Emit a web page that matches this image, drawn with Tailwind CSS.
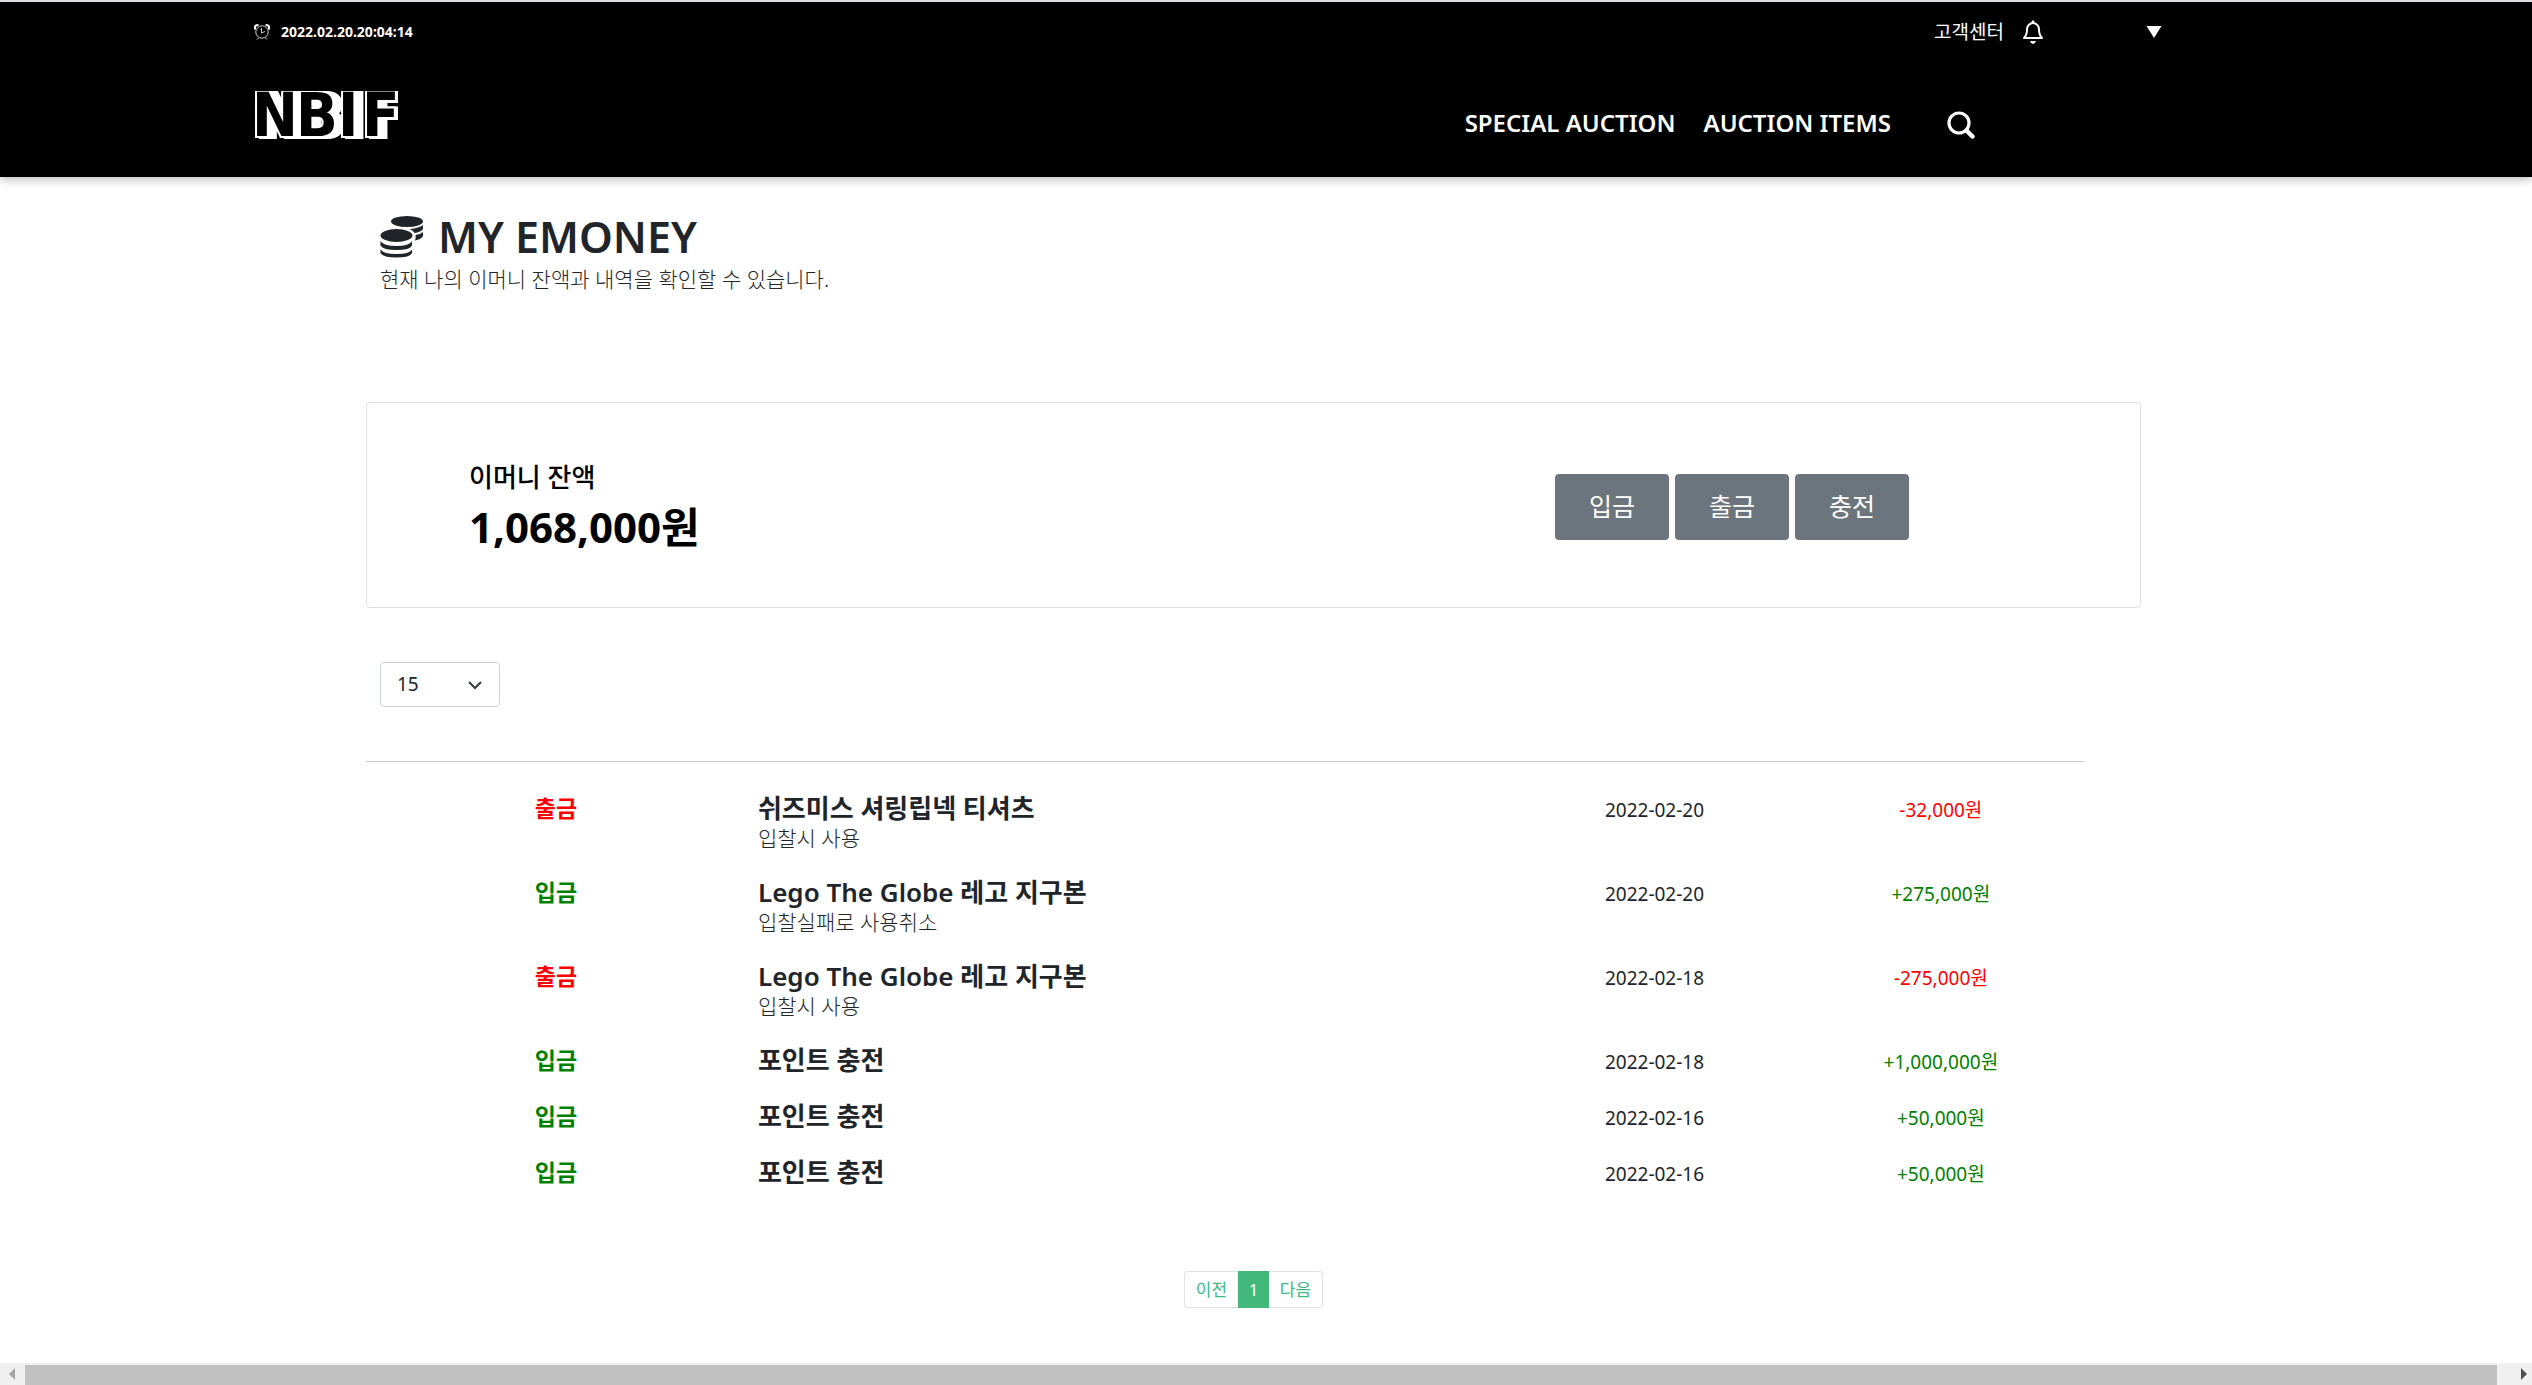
<!DOCTYPE html>
<html lang="ko">
<head>
<meta charset="utf-8">
<meta name="viewport" content="width=device-width, initial-scale=1">
<title>NBIF - MY EMONEY</title>
<script src="https://cdn.jsdelivr.net/npm/@tailwindcss/browser@4"></script>
</head>
<body class="min-h-screen flex flex-col bg-white text-[#212529] font-['Noto_Sans','Noto_Sans_CJK_KR',sans-serif]">
<header class="bg-black text-white border-t-2 border-[#dee1e3] shadow-[0_2px_10px_rgba(0,0,0,0.3)] h-[177px] pl-[254px]">
  <div class="flex items-center h-[60px] pr-[370px]">
    <svg class="w-4 h-4" viewBox="0 0 16 16" fill="none" stroke="#fff"><circle cx="8" cy="8" r="6.200" stroke="#ccc"/><path d="M1 5.500V3Q1 1 4.500 1M15 5.500V3Q15 1 11.500 1" stroke-width="2"/><path d="M7.500 4V9L11 7.500M3 15.500l2-2M13 15.500l-2-2" stroke="#ccc"/></svg>
    <time class="ml-[11px] text-sm font-bold">2022.02.20.20:04:14</time>
    <a href="#" class="ml-auto text-[19px]">고객센터</a>
    <button type="button" aria-label="알림" class="ml-[18px]"><svg class="w-[22px] h-6" viewBox="0 0 22 24" fill="none" stroke="#fff" stroke-width="2" stroke-linejoin="round"><path d="M2 18Q5 15 5 9.500a6 6.500 0 0 1 12 0Q17 15 20 18Z"/><path d="M11 .5v2.500" stroke-width="2.500"/><path d="M8 21h6q-1 3-3 3t-3-3z" fill="#fff" stroke="none"/></svg></button>
    <button type="button" class="ml-[102px]" aria-label="메뉴"><svg class="w-4 h-3" viewBox="0 0 16 12"><path d="M.5 0h15L8 12z" fill="#fff"/></svg></button>
  </div>
  <div class="flex items-center h-[106px] pr-[557px]">
    <a href="#" aria-label="NBIF">
      <svg class="w-36 h-12" viewBox="0 0 144 48" font-family="'Liberation Sans Narrow','DejaVu Sans Condensed',sans-serif" font-weight="bold" font-size="61">
        <defs><text id="logo" x="-2 42 84 108" y="45">NBIF</text></defs>
        <g fill="#fff" stroke="#fff" stroke-width="4"><use href="#logo"/><use href="#logo" x="2"/><use href="#logo" x="4" y="1"/><use href="#logo" x="6" y="1"/><use href="#logo" x="8" y="1"/></g>
        <use href="#logo" fill="#000"/>
      </svg>
    </a>
    <nav class="ml-auto mt-4 flex items-center text-2xl font-semibold">
      <a href="#">SPECIAL AUCTION</a>
      <a href="#" class="ml-7">AUCTION ITEMS</a>
      <button type="button" class="ml-14 mt-1" aria-label="검색"><svg class="w-7 h-7" viewBox="0 0 28 28" fill="none" stroke="#fff" stroke-width="3.200" stroke-linecap="round"><circle cx="12" cy="12" r="10"/><path d="M19.500 19.500l6 6" stroke-width="4.500"/></svg></button>
    </nav>
  </div>
</header>

<main class="pl-[366px] pr-[391px] pt-9">
  <div class="pl-[14px]">
    <h1 class="flex items-center text-[43px] leading-12 font-semibold">
      <svg class="w-11 h-11 mr-3.5" viewBox="0 0 44 44" fill="currentColor"><ellipse cx="27" cy="6.500" rx="16" ry="5.500"/><ellipse cx="16.500" cy="20.500" rx="16" ry="6.500"/><path d="M.5 26q3 5 16 5t15.500-5v4.500q-2 4.500-15.500 4.500T.5 30.500zM.5 34.500q3 4.500 16 4.500t15.500-4.500V38q-2 4.500-15.500 4.500T.5 38zM30 14q9-1 13-4v4q-2 3-8.500 4-1.500-2.500-4.500-4zM35.500 20q5-.5 7.500-3v4q-1.500 3-8 4.500 1-3 .5-5.500z"/></svg>
      MY EMONEY
    </h1>
    <p class="mt-1 text-[21px] leading-7 font-light">현재 나의 이머니 잔액과 내역을 확인할 수 있습니다.</p>
  </div>

  <section class="mt-[109px] h-[206px] flex items-center justify-between border border-[#dfdfdf] rounded pl-[102px] pr-[231px] text-black">
    <div>
      <h2 class="mt-1 text-[26px] leading-9 font-medium">이머니 잔액</h2>
      <p class="mt-1 text-[42px] leading-14 font-bold">1,068,000원</p>
    </div>
    <div class="mt-1 flex gap-1.5 text-[25px] text-white">
      <button type="button" class="w-[114px] h-[66px] rounded bg-[#6c757d]">입금</button>
      <button type="button" class="w-[114px] h-[66px] rounded bg-[#6c757d]">출금</button>
      <button type="button" class="w-[114px] h-[66px] rounded bg-[#6c757d]">충전</button>
    </div>
  </section>

  <div class="mt-[54px] ml-[14px] grid w-[120px] h-[45px]">
    <select aria-label="표시 개수" class="col-start-1 row-start-1 appearance-none border border-[#ced4da] rounded pl-4 text-[19px] bg-white"><option>15</option><option>30</option><option>50</option></select>
    <svg class="col-start-1 row-start-1 justify-self-end self-center mr-[18px] w-3.5 h-3.5 pointer-events-none" viewBox="0 0 14 14" fill="none" stroke="#343a40" stroke-width="2"><path d="M1 4l6 6 6-6"/></svg>
  </div>

  <div class="mt-[54px] mr-[57px] border-t border-[#c8c9ca] pt-[18px]">
    <table class="w-full table-fixed text-[19px]">
      <colgroup><col class="w-[22%]"><col><col class="w-1/6"><col class="w-1/6"></colgroup>
      <tbody class="align-top">
        <tr>
          <td class="py-3 pl-0.5 text-center text-[23px] leading-8 font-bold text-[#ff0000]">출금</td>
          <td class="py-3 pl-3.5"><p class="text-[26px] leading-8 font-semibold">쉬즈미스 셔링립넥 티셔츠</p><p class="text-[21px] leading-7 font-light">입찰시 사용</p></td>
          <td class="py-3 text-center leading-9">2022-02-20</td>
          <td class="py-3 text-center leading-9 text-[#ff0000]">-32,000원</td>
        </tr>
        <tr>
          <td class="py-3 pl-0.5 text-center text-[23px] leading-8 font-bold text-[#008000]">입금</td>
          <td class="py-3 pl-3.5"><p class="text-[26px] leading-8 font-semibold">Lego The Globe 레고 지구본</p><p class="text-[21px] leading-7 font-light">입찰실패로 사용취소</p></td>
          <td class="py-3 text-center leading-9">2022-02-20</td>
          <td class="py-3 text-center leading-9 text-[#008000]">+275,000원</td>
        </tr>
        <tr>
          <td class="py-3 pl-0.5 text-center text-[23px] leading-8 font-bold text-[#ff0000]">출금</td>
          <td class="py-3 pl-3.5"><p class="text-[26px] leading-8 font-semibold">Lego The Globe 레고 지구본</p><p class="text-[21px] leading-7 font-light">입찰시 사용</p></td>
          <td class="py-3 text-center leading-9">2022-02-18</td>
          <td class="py-3 text-center leading-9 text-[#ff0000]">-275,000원</td>
        </tr>
        <tr class="h-14">
          <td class="pt-3 pl-0.5 text-center text-[23px] leading-8 font-bold text-[#008000]">입금</td>
          <td class="pt-3 pl-3.5 text-[26px] leading-8 font-semibold">포인트 충전</td>
          <td class="pt-3 text-center leading-9">2022-02-18</td>
          <td class="pt-3 text-center leading-9 text-[#008000]">+1,000,000원</td>
        </tr>
        <tr class="h-14">
          <td class="pt-3 pl-0.5 text-center text-[23px] leading-8 font-bold text-[#008000]">입금</td>
          <td class="pt-3 pl-3.5 text-[26px] leading-8 font-semibold">포인트 충전</td>
          <td class="pt-3 text-center leading-9">2022-02-16</td>
          <td class="pt-3 text-center leading-9 text-[#008000]">+50,000원</td>
        </tr>
        <tr class="h-14">
          <td class="pt-3 pl-0.5 text-center text-[23px] leading-8 font-bold text-[#008000]">입금</td>
          <td class="pt-3 pl-3.5 text-[26px] leading-8 font-semibold">포인트 충전</td>
          <td class="pt-3 text-center leading-9">2022-02-16</td>
          <td class="pt-3 text-center leading-9 text-[#008000]">+50,000원</td>
        </tr>
      </tbody>
    </table>
  </div>

  <nav aria-label="페이지" class="mt-[71px] flex justify-center text-[17px] leading-[35px] text-center text-[#41b883]">
    <a href="#" class="w-[54px] border border-r-0 border-[#dee2e6] rounded-l">이전</a>
    <a href="#" aria-current="page" class="w-[31px] border border-[#42b97a] bg-[#42b97a] text-white">1</a>
    <a href="#" class="w-[54px] border border-l-0 border-[#dee2e6] rounded-r">다음</a>
  </nav>
</main>

<div class="mt-auto h-[22px] bg-[#f0f0f0] flex items-center" aria-hidden="true">
  <svg class="w-[25px] h-3 shrink-0" viewBox="0 0 25 12"><path d="M9 6l6-6v12z" fill="#a3a3a3"/></svg>
  <div class="grow h-5 mt-0.5 bg-[#c1c1c1]"></div>
  <svg class="w-[35px] h-3 shrink-0" viewBox="0 0 35 12"><path d="M30 6l-6-6v12z" fill="#505050"/></svg>
</div>
</body>
</html>
